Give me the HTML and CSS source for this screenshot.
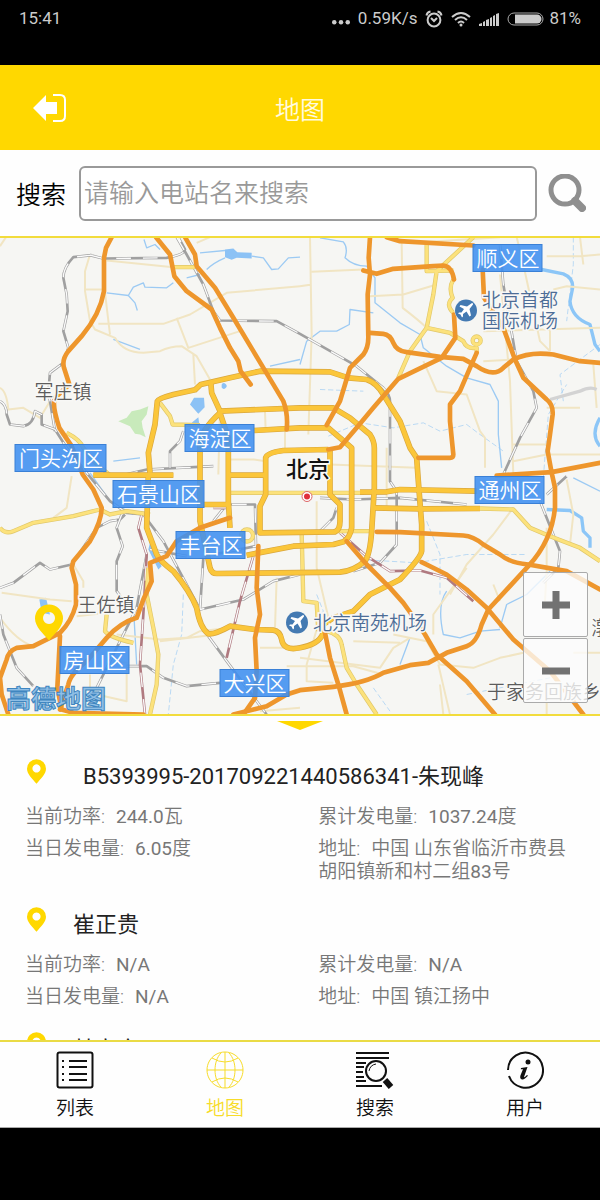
FILE: index.html
```html
<!DOCTYPE html>
<html lang="zh-CN">

<head>
    <meta charset="utf-8">
    <title>地图</title>
    <meta name="viewport" content="width=device-width, initial-scale=1">
    <link rel="stylesheet" href="styles.css">
</head>

<body>
    <!-- status bar -->
    <div class="status">
        <span>15:41</span>
        <div class="status-right">
            <svg class="dots" viewBox="0 0 16 12"><circle cx="2" cy="9" r="2" /><circle cx="8" cy="9" r="2" /><circle cx="14" cy="9" r="2" /></svg>
            <span>0.59K/s</span>
            <svg class="alarm" viewBox="0 0 18 18">
                <circle cx="9" cy="10" r="6.4" />
                <path d="M6 8l3 3 3-3M1.5 5.5Q2 2 5.5 1.5M16.500 5.5Q16 2 12.500 1.5" />
            </svg>
            <svg class="wifi" viewBox="0 0 20 16">
                <path d="M1 6Q10-2 19 6M4 9Q10 3.500 16 9M7 12Q10 9 13 12" />
                <circle cx="10" cy="14" r="1.500" />
            </svg>
            <svg class="signal" viewBox="0 0 20 14"><path d="M0 14v-2l3-1v3zM4 14v-4l2-1v5zM7 14v-6l3-1v7zM11 14v-8l2-1v9zM14 14v-10l2-1v11zM17 14v-12l3-1v13z" /></svg>
            <svg class="battery" viewBox="0 0 37 14">
                <rect class="shell" x="1" y="1" width="35" height="12" rx="6" />
                <path d="M8 2.500h22a4.500 4.500 0 0 1 0 9H8z" />
            </svg>
            <span>81%</span>
        </div>
    </div>

    <!-- title bar -->
    <header class="topbar">
        <button class="back" type="button" aria-label="退出">
            <svg viewBox="0 0 34 30">
                <path class="arrow" d="M0 15L13 2v7h11v12H13v7z" />
                <path class="door" d="M20 2h7q5 0 5 5v16q0 5-5 5h-7" />
            </svg>
        </button>
        <h1>地图</h1>
    </header>

    <!-- search -->
    <form class="search">
        <label for="station">搜索</label>
        <input id="station" type="text" placeholder="请输入电站名来搜索">
        <button type="button" aria-label="搜索">
            <svg viewBox="0 0 38 38">
                <circle cx="17" cy="16" r="14" />
                <path d="M27 27l7 7" />
            </svg>
        </button>
    </form>

    <!-- map -->
    <section class="map">
        <svg class="map-canvas" viewBox="0 0 600 477" preserveAspectRatio="xMidYMid slice">
            <defs>
                <g id="rings">
                    <path d="M450 715L445 655 465 570 472 500Q475 492 520 480L585 466 602 450 690 430 780 410 990 412 1045 430 1100 435Q1130 445 1150 480L1200 560 1230 640 1250 670 1255 740 1265 870V950Q1262 970 1200 1035L1110 1080 1060 1130 1000 1150 970 1170 968 1200Q955 1230 900 1240 850 1250 845 1215 840 1190 820 1187L765 1185 690 1175Q645 1200 625 1198 600 1180 590 1120 570 1070 520 1010 480 980 470 960L440 880 445 720" />
                    <path d="M632 440L635 475 660 530 900 520H1000L1050 550 1110 600Q1123 620 1123 640V760L1115 890Q1110 960 1095 980 1060 1010 1020 1013L650 1017Q635 1017 630 1000L600 860V630Q600 590 660 535L685 610 685 800 690 880" />
                    <path d="M762 588L900 580H985L1055 640V880Q1050 910 1030 922L1000 930 880 935 740 962" />
                    <path d="M985 645L850 648Q800 655 797 670V780L780 815V895L1005 892Q1020 885 1020 860V810L990 780V645" />
                    <path d="M280 722H520M600 810H690M685 722H800M1080 773L1160 772 1200 765 1430 770M1120 820L1260 823 1440 822" />
                </g>
                <g id="roads">
                    <path d="M0 880Q15 900 40 890L100 865 220 845 300 825 330 840 380 830 450 840M520 98H585M1420 8L1310 110 1300 180 1280 280 1230 350 1195 430M1280 30V110L1360 108M1280 280L1350 295 1390 320Q1400 345 1430 340V355M1360 135Q1345 160 1358 190 1335 210 1360 235M1440 822L1540 825 1590 880 1650 905 1740 940 1800 980" />
                    <path d="M480 505L510 545 518 570 600 572M445 1000L440 1080 460 1180 475 1260 470 1350 450 1440M320 1140L315 1190Q330 1210 400 1225M980 1190Q1020 1200 1025 1230L1040 1300 1070 1350 1130 1440M905 895L910 1100 950 1105 955 1190M200 595Q240 615 250 640L290 690 330 722M690 775H1080M1000 890H1120" />
                    <circle cx="1430" cy="318" r="12" /><circle cx="741" cy="903" r="18" />
                </g>
                <g id="rails">
                    <path d="M275 62L220 68Q190 100 190 130L200 180 203 230 190 290 205 340 190 385 150 415 145 470 165 590M270 62L310 72 500 70Q555 60 555 45L535 8M530 8L560 60 610 150 640 230 660 258 830 260 900 298 1070 395 1150 460Q1170 480 1170 500V740L1190 770V930L1140 985 1060 1010" />
                    <path d="M0 500Q20 510 20 540L30 570 70 575Q100 570 105 530L125 540V570L165 585 200 640 260 715 330 800 380 835 430 840 490 920 600 1125 730 1095 820 1040 900 1020M550 590L540 620 510 650V700M370 722L440 705 640 695" />
                    <path d="M0 1060L40 1045 120 985 150 1005 215 990 290 880 330 860 360 855 375 840M365 840L350 880 368 935 350 980V1070L380 1110M600 1125L610 970M625 1205L680 1280 800 1440M380 1295H440L490 1330 560 1355 660 1345M0 1140L10 1200 50 1300 100 1355M440 960L410 1120 290 1360M450 945L560 965M640 860L680 810H765L768 935 640 960" />
                    <path d="M1500 30L1510 150 1550 380 1600 470 1610 520 1560 610 1510 720M960 790L1060 795 1200 790 1400 810M1620 800L1680 950 1675 1000 1630 1045M960 890L1000 850 1010 820M1640 780L1700 725" />
                </g>
                <g id="metro">
                    <path d="M425 840L415 880 440 960 430 1140 420 1290 435 1440M760 965L720 1100 680 1270M1020 895L1100 965 1170 1010 1260 1008 1340 1030 1420 1100M640 820H690" />
                </g>
                <g id="plane">
                    <circle class="plane-disc" r="11" />
                    <path class="plane-body" d="M6-7.500Q7.500-7.500 7-6L3.500-1.500 5 5 3.500 6 .5 1-3 3.500-3 6-4 7-5.500 4-8 3-7 2-4.500 2-2-1.500-6.500-4-5.500-5.500 1-4z" />
                </g>
                <path id="pin" fill-rule="evenodd" d="M14 0a14 14 0 0 1 14 14c0 8-8 15-14 22C8 29 0 22 0 14A14 14 0 0 1 14 0zm0 7.500a6 6 0 1 0 .01 0z" />
            </defs>

            <!-- roads are drawn at three units to the pixel -->
            <g class="lines" transform="translate(0 -3) scale(.33333)">
                <path class="park" d="M355 560L380 550 395 530 420 525 445 515 440 540 425 560 428 580 437 608 420 600 405 598 390 575z" />
                <g class="water">
                    <path d="M675 45L700 42 712 53 755 55V72L710 70 695 76 675 68zM570 510L582 490 612 490 614 518 595 538zM575 565L595 548 598 570zM665 450a8 8 0 1 1 0 9zM118 1095l20-5 12 50-25-5zM450 925l35 70-10 10-30-60z" />
                </g>
                <g class="stream">
                    <path d="M432 15L440 40 465 30 480 45M600 55L675 48M755 65L790 70 815 105 835 103 865 70 900 68M620 105Q640 85 675 70M320 175L385 183 400 158 430 145 435 158 500 160 520 145M560 130L600 120M385 183L405 205 412 228M810 395L900 375M340 315L420 345M340 680L420 670M270 715L330 800 400 840" />
                    <path d="M960 10L1030 22Q1045 40 1035 70 1060 95 1100 95L1125 130V205L1200 265 1260 300 1270 340 1340 395 1400 430 1470 450 1495 500V600L1505 700M1120 235L1050 225 1048 270 1010 290 960 290 920 320 900 390M1340 1070Q1310 1110 1330 1200L1380 1210 1440 1190 1500 1185M1500 1180L1520 1110 1580 1080 1650 1010M1720 730L1800 770M1230 1210L1200 1290M400 1110L410 1290" />
                    <path class="faint" d="M960 465L1090 470M985 605L1080 565 1180 580 1270 565 1320 590 1400 570 1440 600 1510 650M950 1080L970 1130 950 1150M1720 8V90L1700 260M1690 500L1680 420 1800 330M1630 730L1645 540 1700 450M1080 975L1250 985 1400 960 1580 960M1280 860L1320 960V1080M550 1080L545 1200 520 1290 505 1440M1400 1380L1650 1330M1120 1360L1170 1430" />
                </g>
                <path class="river" d="M1625 105L1690 118Q1720 130 1718 160L1710 200Q1715 250 1770 270L1785 330 1800 350M1800 550Q1770 600 1800 635M1640 825L1710 828 1745 850 1750 890 1770 910V940" />
                <g class="minor">
                    <path d="M0 35L20 5M270 60L255 110V170L270 260 285 285 345 310Q370 355 430 355L480 350Q510 335 545 335L590 365 630 435M315 175L330 300M295 268H490L570 240 680 175 900 155M320 78L520 98M255 165H310M530 250L565 340 720 290M580 360L585 450M590 25L630 8M0 460Q20 470 25 525L70 520 120 550 150 500M795 530L797 590M855 590V645M660 520L655 720M690 675H760L797 680" />
                    <path d="M930 8L935 300 925 600M900 155L935 150M935 112L1090 105M1110 185L1210 180 1310 150M1205 25L1208 220Q1260 260 1280 280M1270 380L1310 470 1400 480 1440 590 1455 610V700M1500 120L1530 440 1540 720M1550 8L1570 90 1620 320 1650 350M1450 290L1800 280M1640 65H1740L1800 60M1750 90L1740 8M1660 165L1700 155 1800 165M1650 240V350M1450 380L1540 375M1640 520H1740M1540 630H1640M1540 680L1640 660 1800 660M1780 390L1790 520M990 690L1250 700M1160 640V820M1240 25L1500 8M1700 735L1720 840 1710 930M1540 820L1480 900 1400 990 1350 1080" />
                    <path d="M215 725L200 820 160 850M5 1075L80 1085 150 1095 215 1100M220 990L250 1040V1060M0 1150Q50 1220 100 1235M230 1145L320 1135M350 1200L480 1215 560 1210 600 1190 690 1180M480 1220L650 1200M340 1280L380 1285V1400L290 1380M270 1320V1425M780 1240H900M825 1180L830 1030M860 1295H900M780 1430L900 1420M960 1150L920 1290V1340L1000 1345M950 800V1000L990 1170M900 1270L1140 1300 1180 1240 1230 1210M900 1295L1060 1295 1150 1320M1060 1220L1200 1225M1180 1200L1280 1220 1320 1290 1420 1300 1500 1270 1570 1255M1315 1290L1350 1440M1300 1200V1140L1400 1000M1640 880V1010L1635 1100M1480 1050L1500 1100M1720 1255H1800M1640 1380V1440M1320 1350L1330 1440" />
                </g>
                <g class="rail-base"><use href="#rails" /></g>
                <g class="rail-dash"><use href="#rails" /></g>
                <g class="metro-base"><use href="#metro" /></g>
                <g class="metro-dash"><use href="#metro" /></g>
                <path class="airway" d="M1650 495L1740 470Q1770 455 1790 465" />
                <g class="road-case"><use href="#roads" /></g>
                <g class="road-fill"><use href="#roads" /></g>
                <g class="ring-case"><use href="#rings" /></g>
                <g class="ring-fill"><use href="#rings" /></g>
                <g class="highway">
                    <path d="M335 8L318 40 312 70V170Q300 240 245 305L205 350Q185 375 192 400L208 450 165 490Q155 510 178 580L215 635 248 720 280 765 305 820Q305 860 270 920L220 980 215 1000 228 1050V1110Q215 1160 180 1195L100 1235 50 1240Q25 1250 20 1275L0 1330 5 1380 25 1440M180 1205L172 1360 185 1425 220 1435 430 1440" />
                    <path d="M468 8L510 60 523 125 560 170 635 225 660 280 690 340 715 380 722 410 752 450M555 8L585 60 590 95 645 160 700 250 760 350 850 500Q865 540 860 585" />
                    <path d="M1110 8L1106 70 1110 120 1103 180 1105 310Q1105 340 1090 360L1050 400 1035 450 1020 500 980 572M1160 8L1200 20 1420 33M1090 108L1130 118 1180 103 1300 95 1330 93Q1355 95 1362 135M1362 240L1366 310 1325 370 1195 433 1120 520 1070 580 1020 638 985 645" />
                    <path d="M1110 295L1150 298Q1170 300 1180 325 1190 350 1220 353L1320 367 1390 373 1430 395Q1480 430 1510 400L1540 375Q1590 350 1660 360L1740 380 1800 385M1430 355L1410 400 1380 470 1350 510V560L1360 660Q1360 670 1350 670H1255" />
                    <path d="M1448 105L1452 190 1475 225 1510 280 1545 375 1570 430 1640 495Q1660 510 1658 540L1650 600 1643 650 1655 715 1665 760V820Q1655 920 1585 995L1465 1125 1445 1170Q1430 1225 1400 1235L1340 1255 1285 1285 1230 1292 1150 1315Q1100 1345 1000 1357L900 1367 860 1380 800 1415 700 1440M1490 723L1655 713 1800 685" />
                    <path d="M1130 892L1200 893 1390 903Q1420 905 1450 930L1500 960Q1530 985 1585 990L1660 1003 1700 1010 1800 1065M1265 983L1340 1020 1400 1065 1460 1120 1540 1215 1650 1310 1750 1440M1040 920L1100 990 1170 1060 1210 1105 1235 1140 1275 1200 1310 1260 1400 1340 1485 1440M975 1195L990 1270 1015 1350 1040 1440" />
                    <path d="M775 935L770 1060 780 1140 765 1210 770 1310 765 1390 730 1440M690 850L600 880 530 920 500 965 450 985 455 1040 430 1095 410 1150Q360 1165 320 1210L260 1280Q210 1320 205 1350L180 1425" />
                </g>
            </g>

            <!-- places -->
            <g class="town" text-anchor="middle">
                <text x="63" y="161">军庄镇</text>
                <text x="106" y="374">王佐镇</text>
                <text x="544" y="461">于家务回族乡</text>
                <text x="601" y="397">漷</text>
            </g>
            <g class="airport">
                <use href="#plane" x="466" y="73" />
                <text x="482" y="69">北京首都</text>
                <text x="482" y="90">国际机场</text>
                <use href="#plane" x="297" y="385" />
                <text x="313" y="392">北京南苑机场</text>
            </g>
            <circle class="capital-ring" cx="307" cy="259" r="5" />
            <circle class="capital-dot" cx="307" cy="259" r="3" />
            <text class="capital" x="308" y="239" text-anchor="middle">北京</text>

            <!-- districts -->
            <g class="district-box">
                <rect x="473" y="7" width="69" height="27" />
                <rect x="185" y="187" width="69" height="27" />
                <rect x="15" y="207" width="91" height="27" />
                <rect x="113" y="243" width="91" height="27" />
                <rect x="475" y="239" width="69" height="27" />
                <rect x="176" y="294" width="69" height="27" />
                <rect x="60" y="409" width="69" height="27" />
                <rect x="220" y="432" width="69" height="27" />
            </g>
            <g class="district" text-anchor="middle">
                <text x="508" y="28">顺义区</text>
                <text x="220" y="208">海淀区</text>
                <text x="61" y="228">门头沟区</text>
                <text x="159" y="264">石景山区</text>
                <text x="510" y="260">通州区</text>
                <text x="211" y="315">丰台区</text>
                <text x="95" y="430">房山区</text>
                <text x="255" y="453">大兴区</text>
            </g>
            <use class="pin" href="#pin" x="35" y="367" />
            <text class="brand" x="6" y="470">高德地图</text>
        </svg>
        <div class="zoom">
            <button type="button" aria-label="放大"><svg viewBox="0 0 28 28"><path d="M0 14h28M14 0v28" /></svg></button>
            <button type="button" aria-label="缩小"><svg viewBox="0 0 28 28"><path d="M0 14h28" /></svg></button>
        </div>
    </section>

    <!-- station list -->
    <main class="list">
        <svg class="fold" viewBox="0 0 46 9"><path d="M0 0h46L23 9z" /></svg>
        <ul>
            <li class="station">
                <div class="name serial"><svg class="pin" viewBox="0 0 28 36"><use href="#pin" /></svg><h2>B5393995-201709221440586341-朱现峰</h2></div>
                <div class="info">
                    <p><span>当前功率:</span><b>244.0</b>瓦</p>
                    <p><span>累计发电量:</span><b>1037.24</b>度</p>
                    <p><span>当日发电量:</span><b>6.05</b>度</p>
                    <p><span>地址:</span>中国 山东省临沂市费县胡阳镇新和村二组<b>83</b>号</p>
                </div>
            </li>
            <li class="station">
                <div class="name"><svg class="pin" viewBox="0 0 28 36"><use href="#pin" /></svg><h2>崔正贵</h2></div>
                <div class="info">
                    <p><span>当前功率:</span><b>N/A</b></p>
                    <p><span>累计发电量:</span><b>N/A</b></p>
                    <p><span>当日发电量:</span><b>N/A</b></p>
                    <p><span>地址:</span>中国 镇江扬中</p>
                </div>
            </li>
            <li class="station">
                <div class="name"><svg class="pin" viewBox="0 0 28 36"><use href="#pin" /></svg><h2>林立方</h2></div>
            </li>
        </ul>
    </main>

    <!-- tabs -->
    <nav class="tabs">
        <a href="#list">
            <svg viewBox="0 0 38 38">
                <rect class="line" x="1.500" y="1.500" width="35" height="35" rx="2" />
                <path class="line" d="M13 10h18M13 16h18M13 23h18M13 29h18" />
                <path class="line" d="M6 10h2M6 16h2M6 23h2M6 29h2" />
            </svg>
            列表
        </a>
        <a class="active" href="#map">
            <svg viewBox="0 0 38 38">
                <path class="thin" d="M19 1a18 18 0 1 0 .01 0zM19 1v36M1 19h36M15 2C7 10 7 28 15 36M23 2C31 10 31 28 23 36M6 7Q19 15 32 7M6 31Q19 23 32 31" />
            </svg>
            地图
        </a>
        <a href="#search">
            <svg viewBox="0 0 38 38">
                <path class="line" d="M0 2h33M0 7h33M0 12h10M0 16h8M0 21h7M0 26h8M0 30h10M0 35h26" />
                <circle class="line" cx="20" cy="20" r="10" />
                <path class="thin" d="M13 20q1-6 7-7" />
                <path class="handle" d="M29 29l6 7" />
            </svg>
            搜索
        </a>
        <a href="#user">
            <svg viewBox="0 0 38 38">
                <path class="line" d="M2 19A17.500 17.500 0 1 1 3 25" />
                <circle class="solid" cx="22" cy="11" r="2.500" />
                <path class="solid" d="M15 17l6.500-1-3.500 10q0 1 3-2l1 .8q-4 4.500-6.500 3.500-2-.8-1-4l2.500-6h-2.200z" />
            </svg>
            用户
        </a>
    </nav>
    <div class="softkeys"></div>
</body>

</html>
```
FILE: styles.css
```css
* {
    box-sizing: border-box;
}

body {
    display: flex;
    flex-direction: column;
    height: 100vh;
    margin: 0;
    background: #fefefe;
    color: #222;
    font-family: Roboto, "Noto Sans CJK SC", sans-serif;
    font-weight: 350;
}

button {
    padding: 0;
    border: 0;
    background: none;
}

svg {
    display: block;
    fill: none;
}

/* status bar */
.status {
    display: flex;
    justify-content: space-between;
    padding: 8px 19px 36px;
    background: #000;
    color: #ccc;
    font-size: 17px;
    line-height: 21px;
    font-weight: 400;
}

.status-right {
    display: flex;
    align-items: center;
    gap: 8px;
    stroke: #ccc;
}

.status-right .dots {
    width: 18px;
    fill: #ccc;
    stroke: none;
}

.alarm {
    width: 18px;
    stroke-width: 2;
}

.wifi {
    width: 20px;
    stroke-width: 2;
}

.wifi circle {
    fill: #ccc;
    stroke: none;
}

.signal {
    width: 20px;
    fill: #ccc;
    stroke: none;
}

.battery {
    width: 37px;
    margin-right: -3px;
    fill: #ccc;
    stroke: none;
}

.battery .shell {
    fill: none;
    stroke: #aaa;
    stroke-width: 1;
}

/* title bar */
.topbar {
    display: grid;
    grid-template-columns: 1fr auto 1fr;
    align-items: center;
    height: 85px;
    padding: 0 33px;
    background: #ffd800;
}

.topbar h1 {
    margin: 0;
    color: #fffbe0;
    font-size: 25px;
    font-weight: 350;
}

.back {
    justify-self: start;
}

.back svg {
    width: 34px;
}

.arrow {
    fill: #fff;
}

.door {
    stroke: #fff;
    stroke-width: 2;
}

/* search */
.search {
    display: flex;
    align-items: center;
    height: 86px;
    padding: 0 14px 0 16px;
    color: #000;
    font-size: 25px;
}

.search input {
    flex: 1;
    min-width: 0;
    height: 55px;
    margin: 0 11px 0 13px;
    padding: 0 3px;
    border: 2px solid #999;
    border-radius: 6px;
    background: #fff;
    font: inherit;
}

.search input::placeholder {
    color: #999;
}

.search svg {
    width: 38px;
    stroke: #8f8f8f;
    stroke-width: 5;
}

.search path {
    stroke-width: 8;
    stroke-linecap: round;
}

/* map */
.map {
    position: relative;
    height: 40vh;
    border-top: 2px solid #f2dc3c;
    border-bottom: 2px solid #f2dc3c;
    background: #f6f6f3;
}

.map-canvas {
    width: 100%;
    height: 100%;
}

.lines {
    stroke-linejoin: round;
}

.park {
    fill: #c8eabb;
}

.water {
    fill: #8cc2f5;
}

.stream {
    stroke: #9ccaf3;
    stroke-width: 4;
}

.faint {
    stroke-width: 2;
    stroke-dasharray: 16 8;
}

.river {
    stroke: #8cc6f7;
    stroke-width: 10;
}

.minor {
    stroke: #f1e5c3;
    stroke-width: 6;
}

.rail-base {
    stroke: #a0a0a0;
    stroke-width: 8;
}

.rail-dash,
.metro-dash {
    stroke: #fbfbfb;
    stroke-width: 4;
    stroke-dasharray: 44 36;
}

.metro-base {
    stroke: #b07a80;
    stroke-width: 8;
}

.airway {
    stroke: #d3d3d3;
    stroke-width: 10;
}

.road-case {
    stroke: #e0c76a;
    stroke-width: 13;
}

.road-fill {
    stroke: #fce27c;
    stroke-width: 9;
}

.ring-case {
    stroke: #d9a73e;
    stroke-width: 17;
}

.ring-fill {
    stroke: #fbc63a;
    stroke-width: 13;
}

.highway {
    stroke: #ee962c;
    stroke-width: 14;
    stroke-linecap: round;
}

.town,
.airport,
.capital {
    stroke: #f8f8f6;
    stroke-width: 3;
    paint-order: stroke;
}

.town {
    fill: #5c5c5c;
    font-size: 19px;
}

.airport {
    fill: #4d6d97;
    font-size: 19px;
}

.plane-disc {
    fill: #447ab2;
    stroke-width: 1;
}

.plane-body {
    fill: #fff;
    stroke: none;
}

.capital {
    fill: #111;
    font-size: 22px;
    font-weight: 500;
}

.capital-ring {
    fill: #fff;
    stroke: #d66;
}

.capital-dot {
    fill: #e02f3c;
}

.district-box {
    fill: #3f8ff0;
    fill-opacity: .88;
    stroke: #3a80d6;
    stroke-width: 1;
}

.district {
    fill: #fff;
    font-size: 21px;
}

.pin {
    fill: #ffd800;
}

.brand {
    fill: #8fbfe6;
    stroke: #3f86c0;
    stroke-width: 1;
    font-size: 25px;
    font-weight: 700;
}

.zoom {
    position: absolute;
    right: 12px;
    bottom: 11px;
    display: grid;
    gap: 1px;
}

.zoom button {
    display: grid;
    place-items: center;
    width: 65px;
    height: 65px;
    border: 1px solid #aaa;
    border-radius: 2px;
    background: rgba(252, 252, 252, .78);
}

.zoom svg {
    width: 28px;
    stroke: #727272;
    stroke-width: 7;
}

/* station list */
.list {
    flex: 1;
    min-height: 0;
    padding: 5px 25px 0;
    overflow: auto;
    scrollbar-width: none;
}

.fold {
    width: 46px;
    margin: 0 auto 29px;
    fill: #ffd800;
}

.list ul {
    margin: 0;
    padding: 0;
    list-style: none;
}

.station {
    padding-bottom: 24px;
}

.name {
    display: flex;
    gap: 27px;
    padding-left: 2px;
}

.serial {
    gap: 37px;
}

.name .pin {
    width: 19px;
    height: 25px;
}

.name h2 {
    margin: 0;
    font-size: 22px;
    line-height: 36px;
    font-weight: 400;
}

.info {
    display: grid;
    grid-template-columns: 8fr 7fr;
    row-gap: 9px;
    margin-top: 10px;
    color: #777;
    font-size: 19px;
    line-height: 23px;
}

.info p {
    margin: 0;
}

.info span {
    margin-right: 11px;
}

.info b {
    font-weight: 400;
}

/* tabs */
.tabs {
    display: flex;
    height: 88px;
    border-top: 2px solid #eadb45;
    border-bottom: 1px solid #aaa;
}

.tabs a {
    display: flex;
    flex: 1;
    flex-direction: column;
    align-items: center;
    gap: 7px;
    padding-top: 9px;
    color: #111;
    font-size: 19px;
    line-height: 26px;
    text-decoration: none;
}

.tabs svg {
    width: 38px;
    stroke: currentColor;
}

.tabs .active {
    color: #f7dc2a;
}

.line {
    stroke-width: 2;
}

.thin {
    stroke-width: 1;
}

.handle {
    stroke-width: 6;
}

.solid {
    fill: currentColor;
    stroke: none;
}

.softkeys {
    height: 72px;
    background: #000;
}
```
